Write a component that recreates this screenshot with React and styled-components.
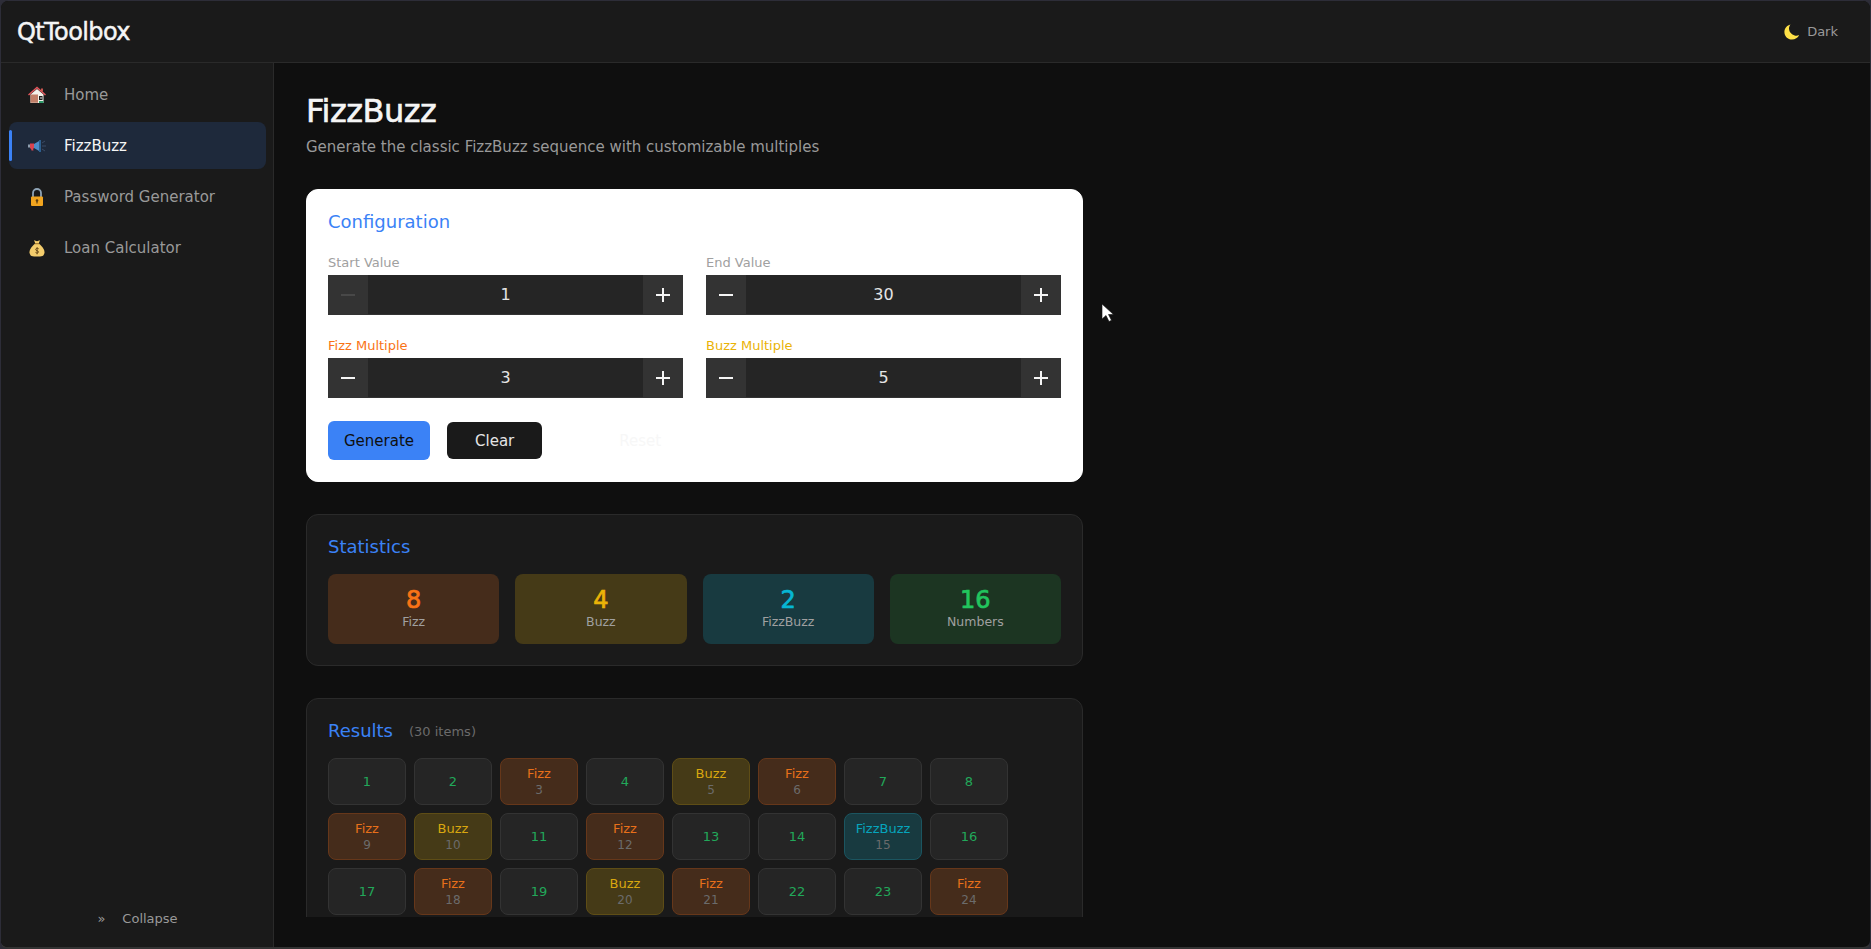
import React from "react";
import styled, { createGlobalStyle } from "styled-components";

const Global = createGlobalStyle`
  html, body { margin: 0; height: 100%; background: #2d2d38; overflow: hidden; }
  #root { height: 100%; }
  * { box-sizing: border-box; }
  body { font-family: "DejaVu Sans", sans-serif; }
`;
const Shell = styled.div`
  position: relative; height: 949px; width: 1871px; display: flex; flex-direction: column;
  background: #0f0f0f; border: 1px solid #2d2d38; border-bottom: 2px solid #333; border-radius: 8px; overflow: hidden;
`;
const Header = styled.header`
  height: 62px; flex: none; display: flex; align-items: center; justify-content: space-between;
  padding: 0 32px 0 16px; background: #1a1a1a; border-bottom: 1px solid #2a2a2a;
`;
const Logo = styled.div`font-size: 24px; letter-spacing: -0.6px; font-weight: 400; color: #f5f5f5; -webkit-text-stroke: 0.45px #f5f5f5;`;
const Theme = styled.div`display: flex; align-items: center; gap: 7px; font-size: 13px; color: #999;`;
const Body = styled.div`flex: 1; display: flex; min-height: 0;`;
const Side = styled.aside`
  width: 273px; flex: none; background: #1a1a1a; border-right: 1px solid #2a2a2a; padding: 8px 7px 8px 8px;
  display: flex; flex-direction: column; gap: 4px;
`;
const NavItem = styled.div`
  position: relative; height: 47px; display: flex; align-items: center; gap: 18px; padding-left: 19px; border-radius: 8px;
  font-size: 15px; color: ${p => p.$active ? "#f5f5f5" : "#999"}; background: ${p => p.$active ? "#1e293b" : "transparent"};
  ${p => p.$active && `&::before { content: ""; position: absolute; left: 0; top: 8px; bottom: 8px; width: 3px; background: #3b82f6; border-radius: 2px; }`}
`;
const Ico = styled.svg`width: 18px; height: 18px; flex: none; display: block;`;
const Collapse = styled.div`
  margin-top: auto; height: 47px; display: flex; align-items: center; justify-content: center; gap: 17px; font-size: 13px; color: #999; padding-top: 6px;
`;
const Main = styled.main`flex: 1; padding: 26px 32px 30px 32px; min-width: 0;`;
const Scroll = styled.div`width: 777px; height: 100%; overflow: hidden; padding-top: 6px;`;
const Title = styled.h1`margin: 0 0 8px; font-size: 32px; line-height: 32px; font-weight: 400; letter-spacing: -0.5px; color: #f5f5f5; -webkit-text-stroke: 0.6px #f5f5f5;`;
const Sub = styled.p`margin: 0 0 30px; font-size: 15px; line-height: 24px; color: #999;`;
const Card = styled.section`
  border-radius: 12px; padding: 21px; margin-bottom: 32px; border: 1px solid ${p => p.$light ? "#fff" : "#2a2a2a"};
  background: ${p => p.$light ? "#fff" : "#1a1a1a"};
`;
const CardTitle = styled.h2`margin: 0; font-size: 18px; line-height: 22px; font-weight: 400; color: #3b82f6;`;
const FormGrid = styled.div`display: grid; grid-template-columns: 355px 355px; column-gap: 23px; row-gap: 21px; margin-top: 20px;`;
const Label = styled.label`display: block; font-size: 13px; line-height: 19px; margin-bottom: 3px; color: ${p => p.$c || "#a0a0a0"};`;
const Stepper = styled.div`height: 40px; display: flex; background: #252525; border-bottom: 1px solid #333;`;
const StepBtn = styled.div`width: 40px; display: flex; align-items: center; justify-content: center; background: #333; margin-bottom: -1px; color: ${p => p.$off ? "#484848" : "#f5f5f5"};`;
const StepVal = styled.div`flex: 1; text-align: center; font-size: 16px; line-height: 39px; color: #e5e5e5;`;
const Actions = styled.div`display: flex; align-items: center; gap: 17px; margin-top: 23px;`;
const Btn = styled.button`
  font: 400 15px "DejaVu Sans", sans-serif; border: none; border-radius: 6px; height: ${p => p.$h}px;
  padding: 0 ${p => p.$px}px; background: ${p => p.$bg}; color: ${p => p.$c};
`;
const StatRow = styled.div`display: grid; grid-template-columns: repeat(4, 1fr); gap: 16px; margin-top: 16px;`;
const Stat = styled.div`
  height: 70px; padding-bottom: 2px; border-radius: 8px; background: ${p => p.$bg}; display: flex; flex-direction: column; align-items: center; justify-content: center;
`;
const StatVal = styled.div`font-size: 24px; line-height: 28px; color: ${p => p.$c}; -webkit-text-stroke: 0.7px ${p => p.$c};`;
const StatLabel = styled.div`font-size: 12.5px; line-height: 16px; color: #a0a0a0;`;
const ResultsHead = styled.div`display: flex; align-items: center; gap: 16px;`;
const Count = styled.span`font-size: 13px; color: #6b6b6b;`;
const Tiles = styled.div`display: grid; grid-template-columns: repeat(auto-fill, 78px); gap: 8px; margin-top: 16px;`;
const Tile = styled.div`
  height: 47px; border-radius: 8px; background: ${p => p.$bg}; border: 1px solid ${p => p.$bd}; display: flex; flex-direction: column; align-items: center; justify-content: center;
`;
const TileText = styled.div`font-size: 13px; line-height: 17px; color: ${p => p.$c};`;
const TileNum = styled.div`font-size: 12px; line-height: 17px; color: #6b6b6b;`;
const Cursor = styled.svg`position: absolute; left: 1100px; top: 302px;`;

const C = { fizz: "#f97316", buzz: "#eab308", fb: "#06b6d4", num: "#22c55e" };
const Minus = () => <svg width="14" height="14" viewBox="0 0 14 14"><path d="M0 7h14" stroke="currentColor" strokeWidth="2" /></svg>;
const Plus = () => <svg width="14" height="14" viewBox="0 0 14 14"><path d="M0 7h14M7 0v14" stroke="currentColor" strokeWidth="2" /></svg>;

const HomeIcon = () => (
  <Ico viewBox="0 0 18 18">
    <path d="M2.5 8.5 9 3l6.500 5.500V17h-13z" fill="#f4f1ea" />
    <path d="M2.5 8.500h7.500V16.800H2.500z" fill="#c17f68" />
    <path d="M11 10h3.500v4H11z" fill="#1c1c1c" />
    <path d="M12.500 11h1v2h-1z" fill="#e8e8e8" />
    <path d="M11 15h4.500v2H11z" fill="#2f9a6a" />
    <path d="M.5 9 9 1.500 17.500 9" fill="none" stroke="#e0565b" strokeWidth="1.500" />
    <path d="M13 2.500h2v3h-2z" fill="#c9564f" />
  </Ico>
);
const MegaIcon = () => (
  <Ico viewBox="0 0 18 18">
    <path d="M0 7.500h2v3H0z" fill="#8f9fb0" />
    <path d="M2 6.500h4v5H5l.5 2h-2L3 11.500H2z" fill="#d94350" />
    <path d="M6 7 12 3.500v11L6 11z" fill="#4c8cc9" />
    <path d="M11 3h2v12h-2z" fill="#2c5e8e" />
    <path d="M14 6l3-2M14 9h4M14 12l3 2" stroke="#3b4c68" strokeWidth="1" fill="none" />
  </Ico>
);
const LockIcon = () => (
  <Ico viewBox="0 0 18 18">
    <path d="M5 9V5a4 4 0 0 1 8 0v4" fill="none" stroke="#8ea3b5" strokeWidth="1.800" />
    <path d="M3 9.500a1 1 0 0 1 1-1h10a1 1 0 0 1 1 1V17a1 1 0 0 1-1 1H4a1 1 0 0 1-1-1z" fill="#f2a51f" />
    <circle cx="9" cy="12.500" r="1.300" fill="#5c3d10" />
    <path d="M8.400 12.500h1.200V15.500H8.400z" fill="#5c3d10" />
  </Ico>
);
const BagIcon = () => (
  <Ico viewBox="0 0 18 18">
    <path d="M6 1.200 9 2.300l3-1.100-1.300 3.300H7.300z" fill="#f4cd6c" />
    <path d="M7 4.800c-2.500 2-5.500 5.200-5.500 8.500 0 3 2.200 4.200 4.500 4.200h6c2.300 0 4.500-1.200 4.500-4.200 0-3.300-3-6.500-5.500-8.500z" fill="#f4cd6c" />
    <path d="M6.800 4.300h4.400v1H6.800z" fill="#a87b2c" />
    <path d="M10.700 9.800C10 9 8 9 7.700 10.300c-.3 1.700 3 1.100 2.800 2.800-.2 1.200-2.300 1.200-3 .3M9.100 8.300v7" fill="none" stroke="#6a4a18" strokeWidth="1" />
  </Ico>
);
const MoonIcon = () => (
  <svg width="16" height="16" viewBox="0 0 16 16" style={{ display: "block" }}>
    <path d="M6.500.4C2.900 1.300.4 4.300.4 8c0 4.300 3.400 7.600 7.600 7.600 3.100 0 5.900-1.800 7.200-4.600-1.200.6-3 .9-4.500.5C7.500 10.600 5.200 8 5 5 4.900 3.300 5.400 1.700 6.500.4z" fill="#fde047" />
  </svg>
);

const Field = ({ label, color, value, off }) => (
  <div>
    <Label $c={color}>{label}</Label>
    <Stepper>
      <StepBtn $off={off}><Minus /></StepBtn>
      <StepVal>{value}</StepVal>
      <StepBtn><Plus /></StepBtn>
    </Stepper>
  </div>
);

const tileKind = (n) => {
  if (n % 15 === 0) return { t: "FizzBuzz", c: "#06a5bd", bg: "#183a40", bd: "#1b5560" };
  if (n % 3 === 0) return { t: "Fizz", c: "#e8701a", bg: "#452c1b", bd: "#66371a" };
  if (n % 5 === 0) return { t: "Buzz", c: "#d9a70f", bg: "#453a17", bd: "#5e4d16" };
  return null;
};

export default function App() {
  return (
    <>
      <Global />
      <Shell>
        <Header>
          <Logo>QtToolbox</Logo>
          <Theme><MoonIcon /><span>Dark</span></Theme>
        </Header>
        <Body>
          <Side>
            <NavItem><HomeIcon />Home</NavItem>
            <NavItem $active><MegaIcon />FizzBuzz</NavItem>
            <NavItem><LockIcon />Password Generator</NavItem>
            <NavItem><BagIcon />Loan Calculator</NavItem>
            <Collapse><span>»</span><span>Collapse</span></Collapse>
          </Side>
          <Main>
            <Scroll>
              <Title>FizzBuzz</Title>
              <Sub>Generate the classic FizzBuzz sequence with customizable multiples</Sub>
              <Card $light>
                <CardTitle>Configuration</CardTitle>
                <FormGrid>
                  <Field label="Start Value" value="1" off />
                  <Field label="End Value" value="30" />
                  <Field label="Fizz Multiple" color={C.fizz} value="3" />
                  <Field label="Buzz Multiple" color={C.buzz} value="5" />
                </FormGrid>
                <Actions>
                  <Btn $h={39} $px={16} $bg="#3b82f6" $c="#0f0f0f">Generate</Btn>
                  <Btn $h={37} $px={28} $bg="#1a1a1a" $c="#e5e5e5">Clear</Btn>
                  <Btn $h={37} $px={60} $bg="transparent" $c="#f7f7f7">Reset</Btn>
                </Actions>
              </Card>
              <Card>
                <CardTitle>Statistics</CardTitle>
                <StatRow>
                  <Stat $bg="#452c1b"><StatVal $c={C.fizz}>8</StatVal><StatLabel>Fizz</StatLabel></Stat>
                  <Stat $bg="#453a17"><StatVal $c={C.buzz}>4</StatVal><StatLabel>Buzz</StatLabel></Stat>
                  <Stat $bg="#183a40"><StatVal $c={C.fb}>2</StatVal><StatLabel>FizzBuzz</StatLabel></Stat>
                  <Stat $bg="#1c3522"><StatVal $c={C.num}>16</StatVal><StatLabel>Numbers</StatLabel></Stat>
                </StatRow>
              </Card>
              <Card>
                <ResultsHead><CardTitle>Results</CardTitle><Count>(30 items)</Count></ResultsHead>
                <Tiles>
                  {Array.from({ length: 30 }, (_, i) => i + 1).map((n) => {
                    const k = tileKind(n);
                    return k ? (
                      <Tile key={n} $bg={k.bg} $bd={k.bd}><TileText $c={k.c}>{k.t}</TileText><TileNum>{n}</TileNum></Tile>
                    ) : (
                      <Tile key={n} $bg="#252525" $bd="#333"><TileText $c="#22a85a">{n}</TileText></Tile>
                    );
                  })}
                </Tiles>
              </Card>
            </Scroll>
          </Main>
        </Body>
        <Cursor width="14" height="20" viewBox="0 0 14 20"><path d="M1 1v15l4-3.500 3 6 2.500-1.200-3-5.800h5z" fill="#fff" stroke="#111" strokeWidth=".6" /></Cursor>
      </Shell>
    </>
  );
}
